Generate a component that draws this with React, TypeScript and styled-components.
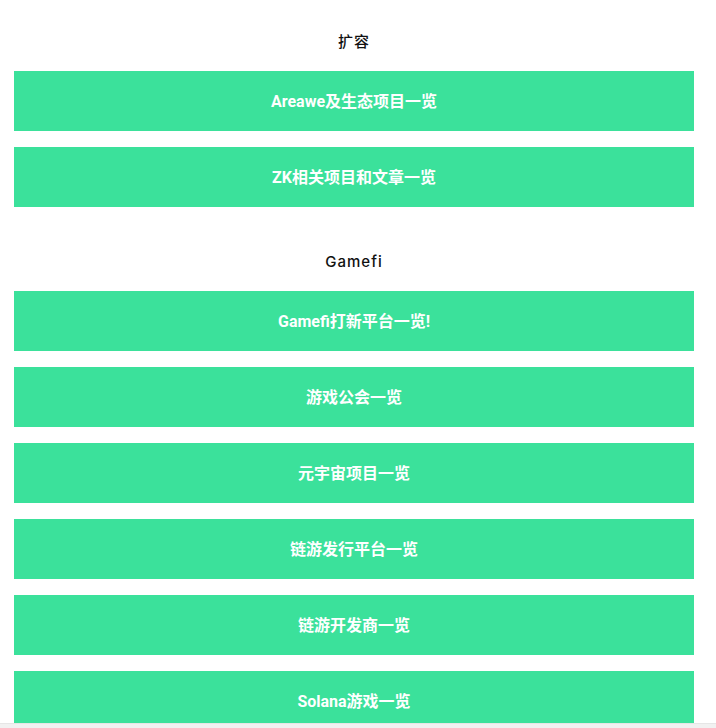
import styled, { createGlobalStyle } from 'styled-components'

const GlobalStyle = createGlobalStyle`
  html, body {
    margin: 0;
    padding: 0;
    background: #ffffff;
  }
  body {
    font-family: 'Inter', 'Noto Sans CJK SC', sans-serif;
  }
`

const Page = styled.div`
  padding: 30px 22px 0 14px;
  display: flex;
  flex-direction: column;
  gap: 43px;
`

const Section = styled.section`
  display: flex;
  flex-direction: column;
`

const SectionTitle = styled.h2`
  margin: 0 0 17px;
  height: 24px;
  line-height: 24px;
  text-align: center;
  font-size: 15px;
  font-weight: 500;
  color: #111111;
  letter-spacing: 1px;
  font-family: 'Inter', 'Noto Sans CJK SC', sans-serif;
`

const LinkList = styled.div`
  display: flex;
  flex-direction: column;
  gap: 16px;
`

const LinkButton = styled.a`
  display: flex;
  align-items: center;
  justify-content: center;
  height: 60px;
  padding-bottom: 2px;
  box-sizing: border-box;
  background: #3be19b;
  color: #ffffff;
  font-family: 'Roboto', 'Noto Sans CJK SC', sans-serif;
  font-size: 16px;
  font-weight: 700;
  text-decoration: none;
  cursor: pointer;
`

const BottomBar = styled.div`
  position: fixed;
  left: 0;
  right: 0;
  bottom: 0;
  height: 4px;
  background: #f1f1f1;
  border-top: 1px solid #e6e6e6;
`

const sections = [
  {
    title: '扩容',
    links: ['Areawe及生态项目一览', 'ZK相关项目和文章一览'],
  },
  {
    title: 'Gamefi',
    links: [
      'Gamefi打新平台一览!',
      '游戏公会一览',
      '元宇宙项目一览',
      '链游发行平台一览',
      '链游开发商一览',
      'Solana游戏一览',
    ],
  },
]

export default function App() {
  return (
    <>
      <GlobalStyle />
      <Page>
        {sections.map((s) => (
          <Section key={s.title}>
            <SectionTitle>{s.title}</SectionTitle>
            <LinkList>
              {s.links.map((l) => (
                <LinkButton key={l}>{l}</LinkButton>
              ))}
            </LinkList>
          </Section>
        ))}
      </Page>
      <BottomBar />
    </>
  )
}
